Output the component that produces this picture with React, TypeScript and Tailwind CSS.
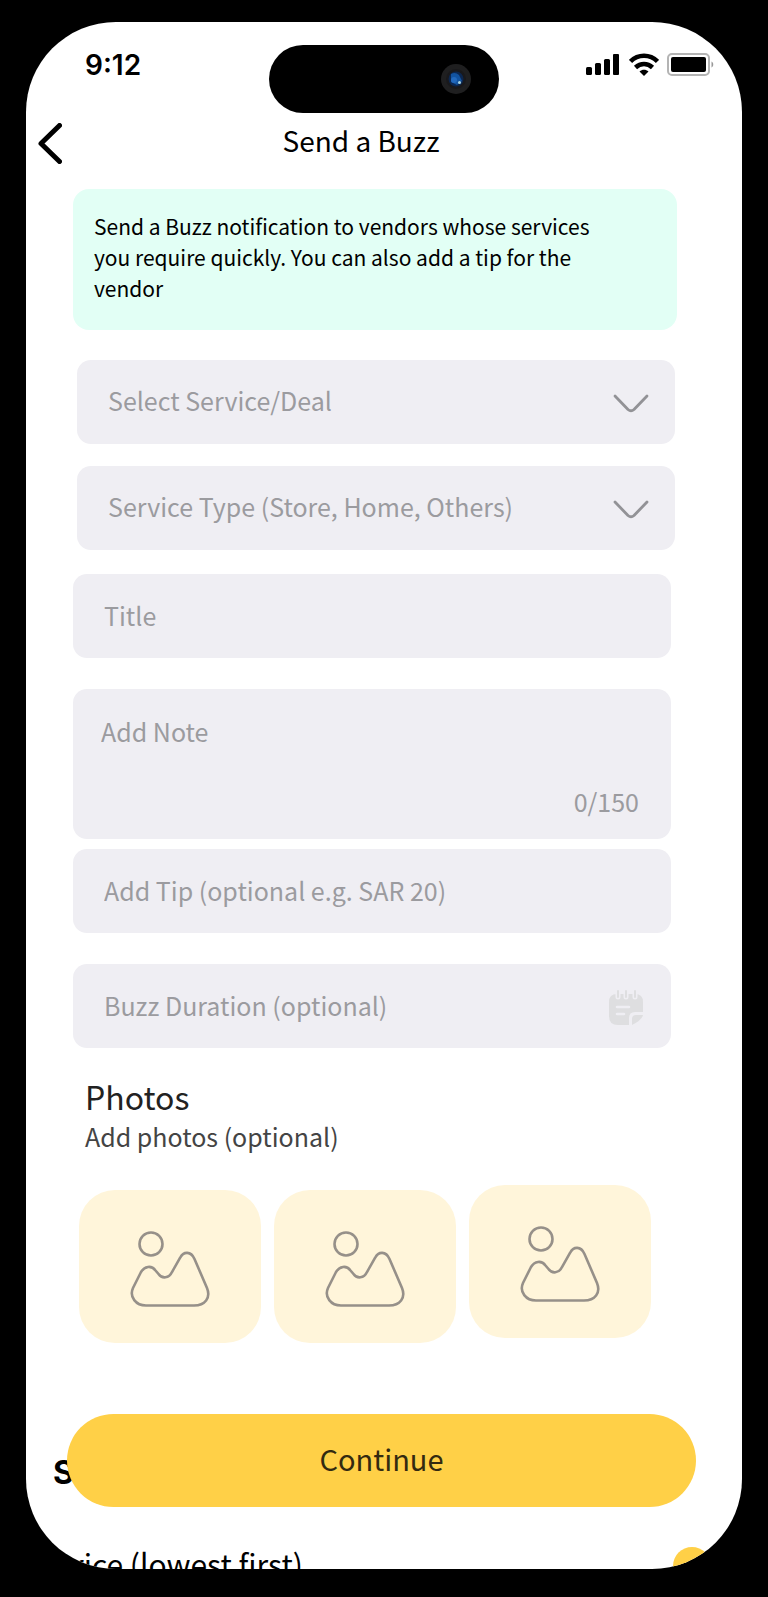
import React, { useState } from 'react';

const FIELD = 'rounded-[14px] bg-[#efeef3] text-[#9b9b9f]';
const FIELD_LINE = 'block h-[84px] w-full px-[31px] pb-[2px] text-[25px] placeholder:text-[#9b9b9f]';
const NOTE_LIMIT = 150;

const StatusBar: React.FC = () => (
  <div className="grid grid-cols-[1fr_230px_1fr] items-start pt-[23px]">
    <p className="pl-[59px] font-['Inter'] text-[28px] leading-10 font-semibold">9:12</p>
    <div className="flex h-[68px] items-center justify-end rounded-full bg-black pr-7">
      <svg className="h-[30px] w-[30px]" viewBox="0 0 30 30" aria-hidden="true">
        <circle cx="15" cy="15" r="15" fill="#1f1f20" />
        <circle cx="15" cy="15" r="10" fill="#19191c" />
        <circle cx="15" cy="15" r="7.500" fill="#0c2750" />
        <path d="M10 10a7 7 0 018 1l3 6-5 4-6-3z" fill="#1253a0" />
        <circle cx="13" cy="16" r="3" fill="#2269bd" />
        <circle cx="18.500" cy="18.500" r="1.500" fill="#a7d3df" />
      </svg>
    </div>
    <div className="flex items-center justify-end gap-2 pt-2 pr-7">
      <svg className="h-[23px] w-[35px]" viewBox="0 0 35 23" aria-hidden="true">
        <rect x="0" y="14" width="6" height="8" rx="1.500" />
        <rect x="9" y="10" width="6" height="12" rx="1.500" />
        <rect x="18" y="6" width="6" height="16" rx="1.500" />
        <rect x="27" y="1" width="6" height="21" rx="1" />
      </svg>
      <svg className="h-[23px] w-[30px]" viewBox="0 0 30 23" fill="none" aria-hidden="true">
        <path d="M1.500 8.500C9 .8 21 .8 28.500 8.500" stroke="#000" strokeWidth="4.500" />
        <path d="M6.500 14.500C11.500 9.800 18.500 9.800 23.500 14.500" stroke="#000" strokeWidth="4.500" />
        <path d="M10.500 18.500c2.800-2.500 6.200-2.500 9 0L15 23z" fill="#000" />
      </svg>
      <svg className="h-[23px] w-[47px]" viewBox="0 0 47 23" fill="none" aria-hidden="true">
        <rect x="1" y="1" width="41" height="21" rx="4" stroke="#b4b4b4" strokeWidth="2" />
        <rect x="4" y="4" width="35" height="15" rx="2" fill="#000" />
        <path d="M44.500 8.500c2.300 1 2.300 5 0 6z" fill="#999" />
      </svg>
    </div>
  </div>
);

interface SelectFieldProps {
  label: string;
}

const SelectField: React.FC<SelectFieldProps> = ({ label }) => (
  <div className="relative">
    <select aria-label={label} className={`appearance-none ${FIELD_LINE} ${FIELD}`}>
      <option>{label}</option>
    </select>
    <svg
      className="pointer-events-none absolute top-[34px] right-[26px] h-[20px] w-[36px]"
      viewBox="0 0 36 20"
      fill="none"
      stroke="#929296"
      strokeWidth="2.800"
      strokeLinecap="round"
      strokeLinejoin="round"
      aria-hidden="true"
    >
      <path d="M2 2l13 13.500q3 2.600 6 0L34 2" />
    </svg>
  </div>
);

const CalendarNoteIcon: React.FC = () => (
  <svg
    className="pointer-events-none absolute top-[26px] right-7 h-[35px] w-[34px]"
    viewBox="0 0 34 35"
    aria-hidden="true"
  >
    <path
      d="M8 4h18q8 0 8 8v10h-8q-6 0-6 6v7H9q-9 0-9-9V12q0-8 8-8z"
      fill="#dedee0"
    />
    <path d="M23 35v-6q0-4 4-4h7q-1 5-11 10z" fill="#dedee0" />
    <path
      d="M9 1v6M17 1v6M26 1v6"
      stroke="#efeef3"
      strokeWidth="5"
      strokeLinecap="round"
    />
    <path d="M9 1v6M17 1v6M26 1v6" stroke="#dedee0" strokeWidth="2" strokeLinecap="round" />
    <path d="M8 17h12M8 24h7" stroke="#efeef3" strokeWidth="2.500" strokeLinecap="round" />
  </svg>
);

const PhotoIcon: React.FC = () => (
  <svg
    className="h-[76px] w-20"
    viewBox="0 0 80 76"
    fill="none"
    stroke="#969089"
    strokeWidth="2.600"
    aria-hidden="true"
  >
    <circle cx="21" cy="13" r="11.500" />
    <path d="M16 74.500H64C75 74.500 81 67 77 57L64.500 28C61 20 53.500 20 50 27L42 41C39 47.500 32 48 28.500 43L25.500 39.500C21.500 34 14.500 35 11 41L3 57C-1 66 6 74.500 16 74.500Z" />
  </svg>
);

export default function App() {
  const [note, setNote] = useState('');

  return (
    <div className="min-h-screen bg-black px-[26px] pt-[22px] pb-7 font-['Noto_Sans_CJK_SC','Noto_Sans',sans-serif] text-black">
      <main className="relative overflow-hidden rounded-[90px] bg-white">
        <StatusBar />

        <header className="flex h-[58px] items-center pr-[94px]">
          <button type="button" aria-label="Back" className="w-12 pt-[2px] pl-3">
            <svg
              className="h-[41px] w-6"
              viewBox="0 0 24 41"
              fill="none"
              stroke="#000"
              strokeWidth="5"
              strokeLinecap="round"
              strokeLinejoin="round"
              aria-hidden="true"
            >
              <path d="M21.500 2.500L3 20.500l18.500 18" />
            </svg>
          </button>
          <h1 className="flex-1 pb-1 text-center text-[28px] leading-10">Send a Buzz</h1>
        </header>

        <form className="pt-[18px] pr-[65px] pl-[47px]" onSubmit={(e) => e.preventDefault()}>
          <p className="rounded-2xl bg-[#e2fff5] pt-[22px] pr-16 pb-[26px] pl-[21px] text-[21px] leading-[31px]">
            Send a Buzz notification to vendors whose services you require quickly. You can also
            add a tip for the vendor
          </p>

          <div className="mt-[30px] mr-[2px] ml-1 grid gap-[22px]">
            <SelectField label="Select Service/Deal" />
            <SelectField label="Service Type (Store, Home, Others)" />
          </div>

          <div className="mt-6 mr-[6px]">
            <input
              type="text"
              aria-label="Title"
              placeholder="Title"
              className={`${FIELD_LINE} ${FIELD}`}
            />

            <div className={`mt-[31px] h-[150px] px-7 pt-6 ${FIELD}`}>
              <textarea
                aria-label="Add Note"
                placeholder="Add Note"
                maxLength={NOTE_LIMIT}
                value={note}
                onChange={(e) => setNote(e.target.value)}
                className="block h-[70px] w-full resize-none text-[25px] leading-9 placeholder:text-[#9b9b9f]"
              />
              <p className="pr-1 text-right text-[25px] leading-9">
                {note.length}/{NOTE_LIMIT}
              </p>
            </div>

            <input
              type="text"
              aria-label="Add Tip"
              placeholder="Add Tip (optional e.g. SAR 20)"
              className={`mt-[10px] ${FIELD_LINE} ${FIELD}`}
            />

            <div className="relative mt-[31px]">
              <input
                type="text"
                aria-label="Buzz Duration"
                placeholder="Buzz Duration (optional)"
                className={`${FIELD_LINE} ${FIELD}`}
              />
              <CalendarNoteIcon />
            </div>
          </div>

          <section className="mt-7 pr-[26px] pl-[6px]">
            <h2 className="pl-[6px] text-[32px] leading-10 text-[#222]">Photos</h2>
            <p className="pl-[6px] text-[25px] leading-10 text-[#444]">Add photos (optional)</p>
            <div className="mt-[29px] grid grid-cols-3 gap-[13px]">
              {['First photo', 'Second photo', 'Third photo'].map((name, i) => (
                <button
                  key={name}
                  type="button"
                  aria-label={name}
                  className={`flex h-[153px] items-center justify-center rounded-[36px] bg-[#fff5da] pt-1 ${
                    i < 2 ? 'mt-[5px]' : ''
                  }`}
                >
                  <PhotoIcon />
                </button>
              ))}
            </div>
          </section>
        </form>

        {/* Sort sheet, peeking out under the button */}
        <div className="mt-[108px] h-[118px] overflow-hidden pr-[31px] pl-[27px]">
          <h2 className="font-['Inter'] text-[32px] leading-[44px] font-bold">Sort</h2>
          <label className="mt-12 flex items-start justify-between text-[30px] leading-10">
            Price (lowest first)
            <input
              type="radio"
              name="sort"
              defaultChecked
              className="mt-1 h-[38px] w-[38px] appearance-none rounded-full bg-[#ffd047]"
            />
          </label>
        </div>

        <button
          type="button"
          className="absolute right-[46px] bottom-[62px] left-[41px] h-[93px] rounded-full bg-[#ffd047] pb-1 text-[29px] text-[#332a10]"
        >
          Continue
        </button>
      </main>
    </div>
  );
}
